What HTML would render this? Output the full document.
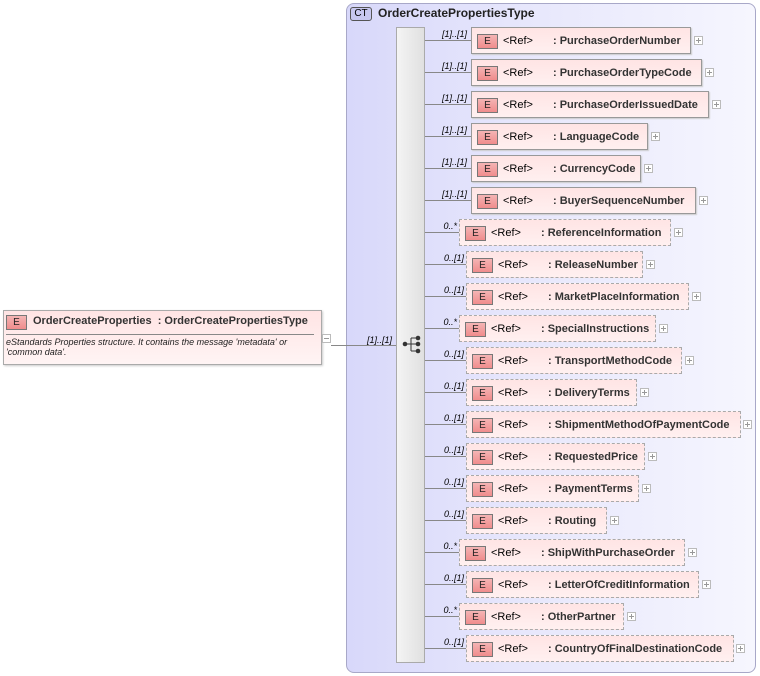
<!DOCTYPE html>
<html><head><meta charset="utf-8"><style>
*{margin:0;padding:0;box-sizing:border-box}
body{width:760px;height:676px;background:#fff;position:relative;overflow:hidden;font-family:"Liberation Sans",Arial,sans-serif;font-size:11px;color:#000}
.a{position:absolute}
.ct{left:346px;top:3px;width:410px;height:670px;border:1px solid #a8a8c8;border-radius:8px;background:linear-gradient(90deg,#d8d8fa 0%,#e6e6fc 40%,#f6f6fe 100%)}
.ctb{left:350px;top:7px;width:22px;height:14px;border:1px solid #555;border-radius:3px;background:#c8c8f0;font-size:10px;line-height:12px;text-align:center}
.bar{left:396px;top:27px;width:29px;height:636px;background:linear-gradient(90deg,#f4f4f4,#e0e0e0);border:1px solid #aaa}
.bx{position:absolute;height:27px;background:linear-gradient(180deg,#ffe4e4,#fff0f0);border:1px solid #999;box-shadow:1px 1px 1px #ccc}
.d{border:1px dashed #aaa;box-shadow:none}
.e{position:absolute;left:5px;top:6px;width:21px;height:15px;border:1px solid #777;background:linear-gradient(#f4b4b4,#f08c8c);font-size:10px;text-align:center;line-height:13px;color:#222}
.r{position:absolute;left:31px;top:7px}
.n{position:absolute;left:81px;top:7px;font-weight:bold;color:#333;white-space:nowrap}
.p{position:absolute;top:9px;width:9px;height:9px;border:1px solid #bbb;background:#fff}
.p:before{content:"";position:absolute;left:1px;top:3px;width:5px;height:1px;background:#999}
.p:after{content:"";position:absolute;left:3px;top:1px;width:1px;height:5px;background:#999}
.mi{position:absolute;width:9px;height:9px;border:1px solid #bbb;background:#fff}
.mi:before{content:"";position:absolute;left:1px;top:3px;width:5px;height:1px;background:#999}
.ln{position:absolute;height:1px;background:#888;left:425px}
.m{position:absolute;font-size:9px;font-style:italic;width:40px;text-align:right}
</style></head><body>
<div class="a ct"></div>
<div class="a ctb">CT</div>
<div class="a" style="left:378px;top:6px;font-weight:bold;font-size:12px;color:#222">OrderCreatePropertiesType</div>
<div class="a bar"></div>
<svg class="a" style="left:400px;top:334px" width="24" height="22"><line x1="5" y1="10" x2="11" y2="10" stroke="#333"/><line x1="11" y1="4" x2="11" y2="17" stroke="#333"/><line x1="11" y1="4" x2="18" y2="4" stroke="#333"/><line x1="11" y1="10" x2="18" y2="10" stroke="#333"/><line x1="11" y1="17" x2="18" y2="17" stroke="#333"/><circle cx="5" cy="10" r="2.3" fill="#333"/><circle cx="18" cy="4" r="2.3" fill="#333"/><circle cx="18" cy="10" r="2.3" fill="#333"/><circle cx="18" cy="17" r="2.3" fill="#333"/></svg>

<div class="a" style="left:3px;top:310px;width:319px;height:55px;border:1px solid #aaa;background:linear-gradient(180deg,#ffe4e4,#fff4f4);box-shadow:1px 1px 2px #ccc"></div>
<div class="e" style="left:6px;top:315px">E</div>
<div class="a" style="left:33px;top:315px;font-weight:bold;font-size:11px;color:#333">OrderCreateProperties&nbsp;&nbsp;: OrderCreatePropertiesType</div>
<div class="a" style="left:6px;top:334px;width:308px;height:1px;background:#888"></div>
<div class="a" style="left:6px;top:337px;font-size:9px;font-style:italic;line-height:10px;color:#222">eStandards Properties structure. It contains the message 'metadata' or<br>'common data'.</div>
<div class="mi" style="left:322px;top:334px"></div>
<div class="a" style="left:331px;top:345px;width:65px;height:1px;background:#888"></div>
<div class="m" style="left:352px;top:335px">[1]..[1]</div>

<div class="ln" style="top:40px;width:46px"></div><div class="m" style="left:427px;top:29px">[1]..[1]</div>
<div class="bx" style="left:471px;top:27px;width:220px"><div class="e">E</div><span class="r">&lt;Ref&gt;</span><span class="n">: PurchaseOrderNumber</span></div><div class="p" style="left:694px;top:36px"></div>

<div class="ln" style="top:72px;width:46px"></div><div class="m" style="left:427px;top:61px">[1]..[1]</div>
<div class="bx" style="left:471px;top:59px;width:231px"><div class="e">E</div><span class="r">&lt;Ref&gt;</span><span class="n">: PurchaseOrderTypeCode</span></div><div class="p" style="left:705px;top:68px"></div>

<div class="ln" style="top:104px;width:46px"></div><div class="m" style="left:427px;top:93px">[1]..[1]</div>
<div class="bx" style="left:471px;top:91px;width:238px"><div class="e">E</div><span class="r">&lt;Ref&gt;</span><span class="n">: PurchaseOrderIssuedDate</span></div><div class="p" style="left:712px;top:100px"></div>

<div class="ln" style="top:136px;width:46px"></div><div class="m" style="left:427px;top:125px">[1]..[1]</div>
<div class="bx" style="left:471px;top:123px;width:177px"><div class="e">E</div><span class="r">&lt;Ref&gt;</span><span class="n">: LanguageCode</span></div><div class="p" style="left:651px;top:132px"></div>

<div class="ln" style="top:168px;width:46px"></div><div class="m" style="left:427px;top:157px">[1]..[1]</div>
<div class="bx" style="left:471px;top:155px;width:170px"><div class="e">E</div><span class="r">&lt;Ref&gt;</span><span class="n">: CurrencyCode</span></div><div class="p" style="left:644px;top:164px"></div>

<div class="ln" style="top:200px;width:46px"></div><div class="m" style="left:427px;top:189px">[1]..[1]</div>
<div class="bx" style="left:471px;top:187px;width:225px"><div class="e">E</div><span class="r">&lt;Ref&gt;</span><span class="n">: BuyerSequenceNumber</span></div><div class="p" style="left:699px;top:196px"></div>

<div class="ln" style="top:232px;width:34px"></div><div class="m" style="left:417px;top:221px">0..*</div>
<div class="bx d" style="left:459px;top:219px;width:212px"><div class="e">E</div><span class="r">&lt;Ref&gt;</span><span class="n">: ReferenceInformation</span></div><div class="p" style="left:674px;top:228px"></div>

<div class="ln" style="top:264px;width:41px"></div><div class="m" style="left:424px;top:253px">0..[1]</div>
<div class="bx d" style="left:466px;top:251px;width:177px"><div class="e">E</div><span class="r">&lt;Ref&gt;</span><span class="n">: ReleaseNumber</span></div><div class="p" style="left:646px;top:260px"></div>

<div class="ln" style="top:296px;width:41px"></div><div class="m" style="left:424px;top:285px">0..[1]</div>
<div class="bx d" style="left:466px;top:283px;width:223px"><div class="e">E</div><span class="r">&lt;Ref&gt;</span><span class="n">: MarketPlaceInformation</span></div><div class="p" style="left:692px;top:292px"></div>

<div class="ln" style="top:328px;width:34px"></div><div class="m" style="left:417px;top:317px">0..*</div>
<div class="bx d" style="left:459px;top:315px;width:197px"><div class="e">E</div><span class="r">&lt;Ref&gt;</span><span class="n">: SpecialInstructions</span></div><div class="p" style="left:659px;top:324px"></div>

<div class="ln" style="top:360px;width:41px"></div><div class="m" style="left:424px;top:349px">0..[1]</div>
<div class="bx d" style="left:466px;top:347px;width:216px"><div class="e">E</div><span class="r">&lt;Ref&gt;</span><span class="n">: TransportMethodCode</span></div><div class="p" style="left:685px;top:356px"></div>

<div class="ln" style="top:392px;width:41px"></div><div class="m" style="left:424px;top:381px">0..[1]</div>
<div class="bx d" style="left:466px;top:379px;width:171px"><div class="e">E</div><span class="r">&lt;Ref&gt;</span><span class="n">: DeliveryTerms</span></div><div class="p" style="left:640px;top:388px"></div>

<div class="ln" style="top:424px;width:41px"></div><div class="m" style="left:424px;top:413px">0..[1]</div>
<div class="bx d" style="left:466px;top:411px;width:275px"><div class="e">E</div><span class="r">&lt;Ref&gt;</span><span class="n">: ShipmentMethodOfPaymentCode</span></div><div class="p" style="left:743px;top:420px"></div>

<div class="ln" style="top:456px;width:41px"></div><div class="m" style="left:424px;top:445px">0..[1]</div>
<div class="bx d" style="left:466px;top:443px;width:179px"><div class="e">E</div><span class="r">&lt;Ref&gt;</span><span class="n">: RequestedPrice</span></div><div class="p" style="left:648px;top:452px"></div>

<div class="ln" style="top:488px;width:41px"></div><div class="m" style="left:424px;top:477px">0..[1]</div>
<div class="bx d" style="left:466px;top:475px;width:173px"><div class="e">E</div><span class="r">&lt;Ref&gt;</span><span class="n">: PaymentTerms</span></div><div class="p" style="left:642px;top:484px"></div>

<div class="ln" style="top:520px;width:41px"></div><div class="m" style="left:424px;top:509px">0..[1]</div>
<div class="bx d" style="left:466px;top:507px;width:141px"><div class="e">E</div><span class="r">&lt;Ref&gt;</span><span class="n">: Routing</span></div><div class="p" style="left:610px;top:516px"></div>

<div class="ln" style="top:552px;width:34px"></div><div class="m" style="left:417px;top:541px">0..*</div>
<div class="bx d" style="left:459px;top:539px;width:226px"><div class="e">E</div><span class="r">&lt;Ref&gt;</span><span class="n">: ShipWithPurchaseOrder</span></div><div class="p" style="left:688px;top:548px"></div>

<div class="ln" style="top:584px;width:41px"></div><div class="m" style="left:424px;top:573px">0..[1]</div>
<div class="bx d" style="left:466px;top:571px;width:233px"><div class="e">E</div><span class="r">&lt;Ref&gt;</span><span class="n">: LetterOfCreditInformation</span></div><div class="p" style="left:702px;top:580px"></div>

<div class="ln" style="top:616px;width:34px"></div><div class="m" style="left:417px;top:605px">0..*</div>
<div class="bx d" style="left:459px;top:603px;width:165px"><div class="e">E</div><span class="r">&lt;Ref&gt;</span><span class="n">: OtherPartner</span></div><div class="p" style="left:627px;top:612px"></div>

<div class="ln" style="top:648px;width:41px"></div><div class="m" style="left:424px;top:637px">0..[1]</div>
<div class="bx d" style="left:466px;top:635px;width:268px"><div class="e">E</div><span class="r">&lt;Ref&gt;</span><span class="n">: CountryOfFinalDestinationCode</span></div><div class="p" style="left:736px;top:644px"></div>
</body></html>
